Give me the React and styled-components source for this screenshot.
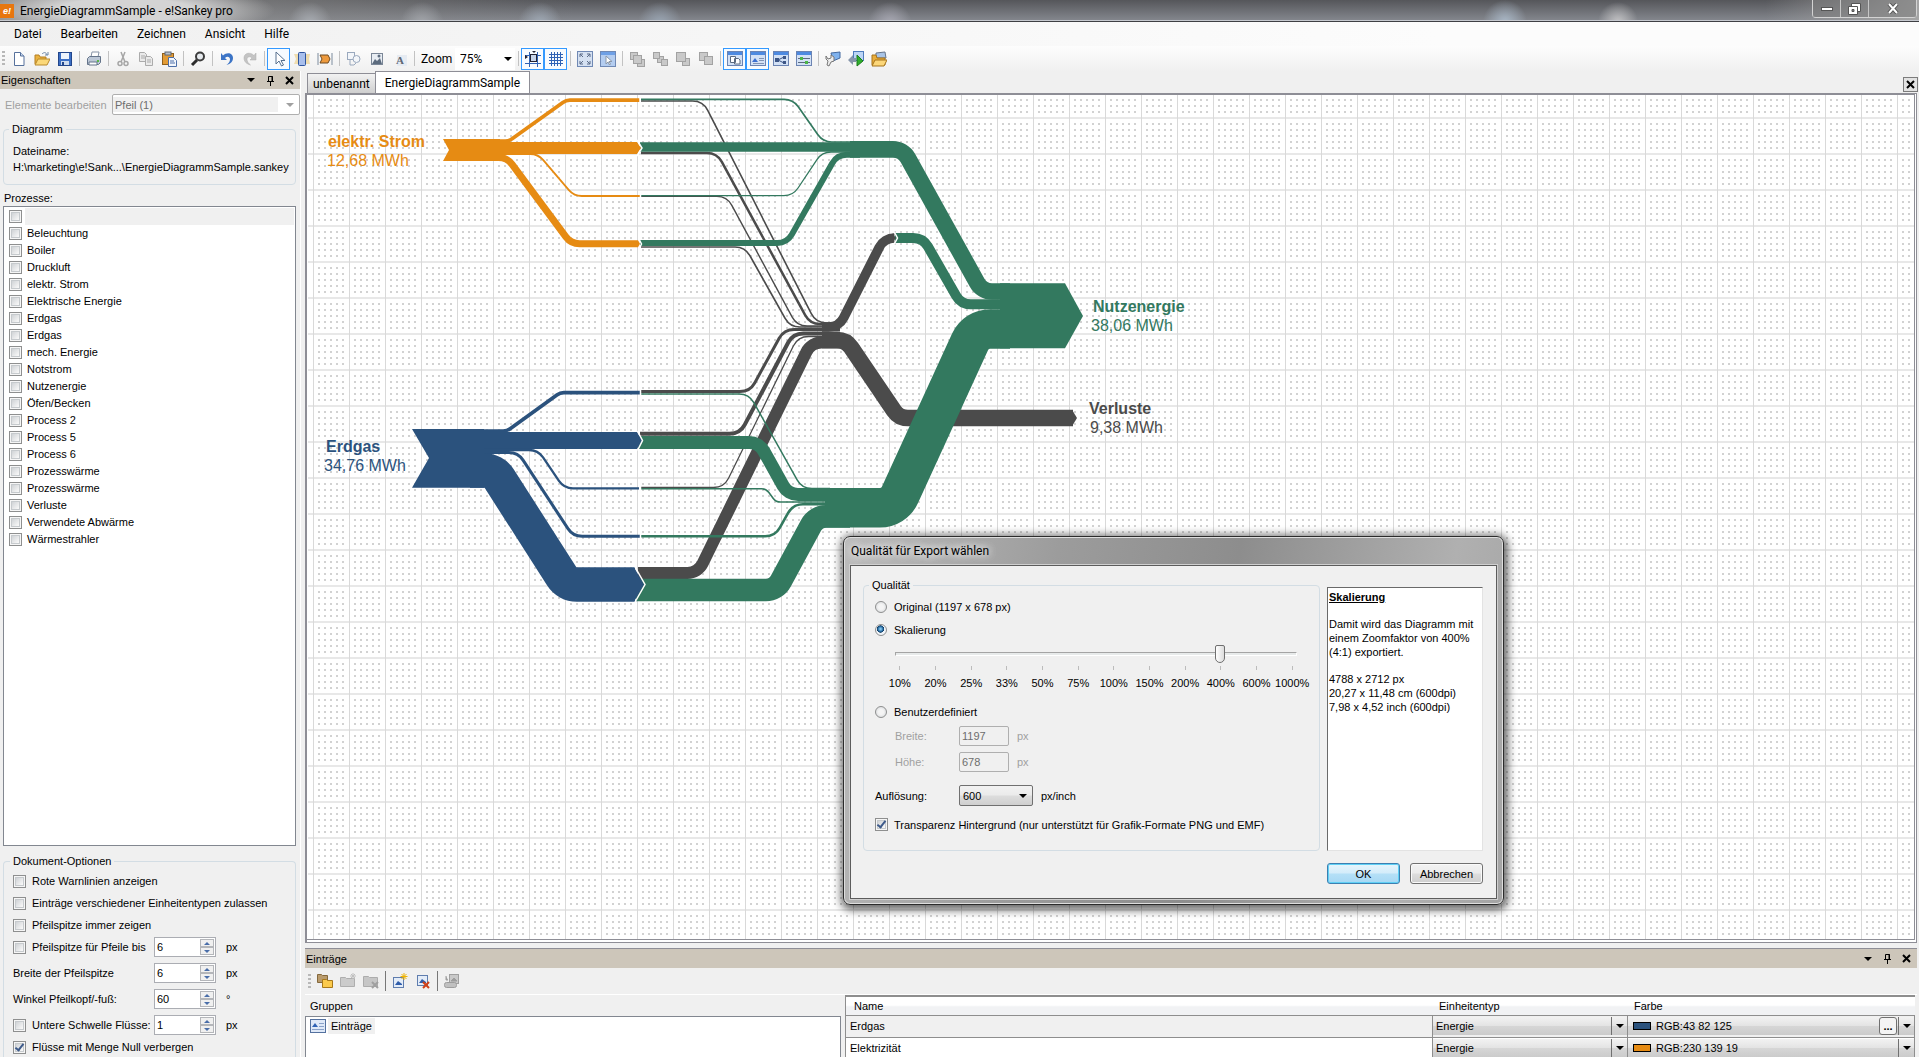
import { useState } from "react";
import styled, { createGlobalStyle, css } from "styled-components";

const GlobalStyle = createGlobalStyle`
  *, *::before, *::after {
    box-sizing: border-box;
  }

  body {
    margin: 0;
    overflow: hidden;
    background: #f0f0f0;
    color: #000;
    font: 11px/14px "Liberation Sans", Arial, sans-serif;
  }

  button, input, select {
    font: inherit;
    color: inherit;
    margin: 0;
  }
`;

const uiFont = css`
  font-family: Roboto, "Noto Sans", sans-serif;
  font-size: 12px;
`;

/* ---------- window frame ---------- */

const Window = styled.div`
  display: flex;
  flex-direction: column;
  height: 100vh;
`;

const TitleBar = styled.header`
  ${uiFont}
  position: relative;
  display: flex;
  flex: none;
  align-items: center;
  gap: 6px;
  height: 22px;
  border-bottom: 1px solid #3f4044;
  box-shadow: inset 0 -1px 0 #c6c9cf;
  background:
    radial-gradient(ellipse 150px 26px at 125px 10px, #d4d4d4 45%, transparent),
    radial-gradient(circle at 310px 24px, #a9adb3, transparent 22px),
    radial-gradient(circle at 422px 24px, #a3a6ab, transparent 22px),
    radial-gradient(circle at 540px 24px, #a0aab6, transparent 22px),
    radial-gradient(circle at 660px 24px, #9aa6b4, transparent 22px),
    radial-gradient(circle at 890px 24px, #a9a9b4, transparent 22px),
    radial-gradient(circle at 1505px 22px, #a9b7c6, transparent 22px),
    radial-gradient(circle at 1618px 22px, #c2c2c4, transparent 20px),
    linear-gradient(to right, #8a8a8a, transparent 30%, transparent 92%, #a5a5a5),
    linear-gradient(#55565a, #85888f);
`;

const AppBadge = styled.span`
  display: grid;
  place-items: center;
  width: 14px;
  height: 14px;
  background: #e8760e;
  color: #fff;
  font: italic bold 9px/12px "Liberation Sans", sans-serif;
`;

const WindowButtons = styled.div`
  display: flex;
  align-self: flex-start;
  height: 18px;
  margin: 0 2px 0 auto;
  border: 1px solid #d3d3d3;
  border-top: 0;
  border-radius: 0 0 4px 4px;
`;

const WindowButton = styled.button`
  display: grid;
  place-items: center;
  width: ${(props) => (props.$wide ? "47px" : "28px")};
  padding: 0;
  border: 0;
  border-right: 1px solid #c6c6c6;
  background: rgba(120, 120, 120, 0.5);

  &:last-child {
    border-right: 0;
  }
`;

const MenuBar = styled.nav`
  ${uiFont}
  display: flex;
  flex: none;
  gap: 19px;
  height: 24px;
  padding-left: 14px;
  align-items: center;
  background: linear-gradient(to right, #f0f0f0, #fcfcfc 75%);
`;

const MenuItem = styled.button`
  padding: 0;
  border: 0;
  background: none;
`;

const ToolBar = styled.div`
  display: flex;
  flex: none;
  align-items: center;
  height: 25px;
  padding-left: 7px;
  background: linear-gradient(#fdfdfd, #f0f0f0);
`;

const Grip = styled.span`
  width: 3px;
  height: 15px;
  margin: 0 ${(props) => (props.$spaced ? "2px" : "2px")} 0 ${(props) => (props.$spaced ? "3px" : "-5px")};
  background: repeating-linear-gradient(#b8b8b8 0 2px, transparent 2px 4px);
`;

const ToolButton = styled.button`
  display: grid;
  flex: none;
  place-items: center;
  width: 23px;
  height: 22px;
  padding: 0;
  border: 1px solid ${(props) => (props.$active ? "#3399ff" : "transparent")};
  background: ${(props) => (props.$active ? "#f7fbff" : "none")};
`;

const ToolSeparator = styled.span`
  flex: none;
  width: 1px;
  height: ${(props) => (props.$dark ? "20px" : "15px")};
  margin: 0 2px 0 3px;
  background: ${(props) => (props.$dark ? "#777" : "#c2c2c2")};
`;

const ZoomLabel = styled.label`
  ${uiFont}
  width: 38px;
  padding-left: 4px;
`;

const Arrow = styled.span`
  width: 0;
  border: 4px solid transparent;
  border-top-color: ${(props) => props.$color || "#000"};
  border-bottom: 0;
  pointer-events: none;
`;

const ZoomBox = styled.span`
  display: flex;
  align-items: center;
  width: 60px;
  height: 22px;
  background: #fff;

  select {
    ${uiFont}
    width: 49px;
    padding: 0 0 0 5px;
    border: 0;
    background: none;
    appearance: none;
  }
`;

const Body = styled.div`
  display: flex;
  flex: 1;
  min-height: 0;
`;

/* ---------- form parts ---------- */

const CheckInput = styled.input`
  position: relative;
  flex: none;
  width: 13px;
  height: 13px;
  border: 1px solid #8e8f8f;
  background: linear-gradient(135deg, #c4c8cc, #f6f6f6 75%);
  box-shadow: inset 0 0 0 1px #f6f6f6, inset 0 0 0 2px #c6cacd;
  appearance: none;

  &:checked::after {
    content: "";
    position: absolute;
    top: 0;
    left: 3px;
    width: 5px;
    height: 9px;
    border: solid #3d5a8a;
    border-width: 0 2px 2px 0;
    transform: rotate(38deg);
  }
`;

const RadioInput = styled.input`
  flex: none;
  width: 12px;
  height: 12px;
  border: 1px solid #8e8f8f;
  border-radius: 50%;
  background: radial-gradient(circle, #f4f4f4 35%, #d0d3d6);
  appearance: none;

  &:checked {
    background: radial-gradient(circle at 45% 40%, #7ec3ee 8%, #17578c 36%, #12395d 42%, #f0f4f8 48%);
  }
`;

const Group = styled.fieldset`
  min-width: 0;
  margin: 0;
  padding: ${(props) => props.$padding || "0 8px"};
  border: 1px solid #d3dde4;
  border-radius: 4px;
`;

const Legend = styled.legend`
  margin-left: ${(props) => (props.$outdent ? "-6px" : "-3px")};
  padding: 0 3px;
`;

const ComboFrame = styled.span`
  display: flex;
  align-items: center;
  height: 21px;
  width: ${(props) => props.$width || "auto"};
  flex: ${(props) => (props.$width ? "none" : "1")};
  padding-right: 5px;
  border: 1px solid ${(props) => props.$border || "#707070"};
  border-radius: 2px;
  background: ${(props) =>
    props.$flat ? "#fff" : "linear-gradient(#f2f2f2, #ebebeb 48%, #dddddd 52%, #cfcfcf)"};

  select {
    flex: 1;
    min-width: 0;
    height: 100%;
    padding: 0 3px;
    border: 0;
    background: none;
    opacity: 1;
    appearance: none;
  }

  select:disabled {
    height: 15px;
    margin-right: 8px;
    padding: 0 2px;
    background: #f0f0f0;
    color: #6d6d6d;
  }
`;

/* ---------- docked panels ---------- */

const PanelHeader = styled.div`
  display: flex;
  flex: none;
  align-items: center;
  gap: 7px;
  height: ${(props) => props.$height || "18px"};
  padding: 0 5px 0 1px;
  background: #cdc6ba;

  span:first-child {
    flex: 1;
  }
`;

const PanelButton = styled.button`
  display: grid;
  place-items: center;
  width: 12px;
  height: 12px;
  padding: 0;
  border: 0;
  background: none;
`;

const SidePanel = styled.aside`
  display: flex;
  flex: none;
  flex-direction: column;
  width: 300px;
`;

const EditRow = styled.div`
  display: flex;
  align-items: center;
  height: 21px;
  margin: 5px 0 7px;
  color: #a0a0a0;

  label {
    width: 107px;
    margin-left: 5px;
  }
`;

const SideContent = styled.div`
  display: flex;
  flex: 1;
  flex-direction: column;
  min-height: 0;
  margin: 0 4px 0 3px;
`;

const FileInfo = styled.p`
  margin: 7px 0 9px;
  padding-left: 1px;
  line-height: 16px;
  white-space: nowrap;
`;

const ListTitle = styled.h2`
  margin: 6px 0 1px 1px;
  font: inherit;
`;

const ProcessList = styled.ul`
  flex: 1;
  min-height: 0;
  margin: 0 0 8px;
  padding: 1px 1px 1px 5px;
  overflow: hidden;
  border: 1px solid #828790;
  background: #fff;
  list-style: none;
`;

const ProcessItem = styled.li`
  display: flex;
  align-items: center;
  gap: 3px;
  height: 17px;

  label {
    flex: 1;
    height: 17px;
    padding-left: 2px;
    line-height: 17px;
    background: ${(props) => (props.$selected ? "#f0f0f0" : "none")};
  }
`;

const OptionGroup = styled(Group)`
  height: 203px;
  padding: 2px 8px 0 9px;
  border-bottom: 0;
  border-radius: 4px 4px 0 0;
`;

const OptionRow = styled.div`
  display: flex;
  align-items: center;
  height: ${(props) => (props.$last ? "20px" : "22px")};
  margin-top: ${(props) => (props.$last ? "1px" : props.$spaced ? "4px" : "0")};

  label {
    white-space: nowrap;
  }

  ${CheckInput} + label {
    margin-left: 6px;
  }

  ${CheckInput} + label.fixed {
    width: 122px;
  }

  label.wide {
    width: 141px;
  }
`;

const SpinBox = styled.span`
  display: flex;
  width: 62px;
  height: 20px;
  margin-right: 10px;
  padding: 1px;
  border: 1px solid #abadb3;
  background: #fff;

  input {
    flex: 1;
    min-width: 0;
    padding: 0 1px;
    border: 0;
    outline: 0;
  }
`;

const SpinButtons = styled.span`
  display: flex;
  flex-direction: column;
  width: 14px;
`;

const SpinButton = styled.button`
  display: grid;
  flex: 1;
  place-items: center;
  padding: 0;
  border: 1px solid #b4b6ba;
  background: #f0f0f0;
`;

const Splitter = styled.div`
  flex: none;
  width: 5px;
  border-left: 1px solid #fff;
  background: #f0f0f0;
`;

/* ---------- diagram area ---------- */

const Main = styled.main`
  display: flex;
  flex: 1;
  flex-direction: column;
  min-width: 0;
`;

const TabStrip = styled.div`
  display: flex;
  flex: none;
  align-items: flex-end;
  height: 22px;
  padding: 0 1px 0 2px;
`;

const Tab = styled.button`
  ${uiFont}
  height: ${(props) => (props.$active ? "22px" : "20px")};
  padding: 0 ${(props) => (props.$active ? "9px" : "5px")};
  border: 1px solid #8e8e96;
  border-bottom: 0;
  border-right-width: ${(props) => (props.$active ? "1px" : "0")};
  background: ${(props) => (props.$active ? "#fff" : "linear-gradient(#f2f2f2, #cfcfcf)")};
`;

const CloseTab = styled.button`
  display: grid;
  place-items: center;
  width: 15px;
  height: 15px;
  margin: 0 0 1px auto;
  padding: 0;
  border: 1px solid #7c7c7c;
  background: #e2e2e2;
`;

const CanvasFrame = styled.div`
  display: flex;
  flex: 1;
  min-height: 0;
  margin-right: 2px;
  padding: 0 1px 2px 0;
  border: 1px solid #8e8e96;
  border-width: 1px 1px 1px 2px;
  background: #fff;
`;

const Canvas = styled.svg`
  display: block;
  flex: 1;
  min-width: 0;
  height: 100%;
  border: 1px solid #8e8e96;
  border-left: 0;
  background: #fff;
`;

const DiagramText = styled.text`
  font: ${(props) => (props.$bold ? "bold" : "normal")} 16px "Liberation Sans", Arial, sans-serif;
`;

/* ---------- entries panel ---------- */

const EntriesPanel = styled.section`
  flex: none;
  height: 109px;
  margin: 5px 2px 0 0;
  overflow: hidden;
  border-top: 1px solid #8e8e96;
`;

const EntriesTools = styled.div`
  display: flex;
  align-items: center;
  height: 27px;
  border-bottom: 1px solid #fff;
`;

const EntriesBody = styled.div`
  display: flex;
  gap: 4px;
  margin-right: 2px;
`;

const GroupTree = styled.div`
  flex: none;
  width: 536px;

  h3 {
    height: 21px;
    margin: 0;
    padding-left: 5px;
    font: inherit;
    line-height: 22px;
  }

  ul {
    height: 44px;
    margin: 0;
    padding: 1px 4px;
    border: 1px solid #828790;
    background: #fff;
    list-style: none;
  }

  li {
    display: flex;
    align-items: center;
    gap: 2px;
  }

  li span {
    padding: 1px 3px;
    background: #f0f0f0;
  }
`;

const EntryTable = styled.table`
  flex: 1;
  border-collapse: collapse;
  border-top: 2px solid #8e8e8e;
  table-layout: fixed;

  th, td {
    height: 19px;
    padding: 0;
    border: 1px solid #8e8e8e;
    text-align: left;
  }

  th {
    padding-left: 6px;
    border-color: transparent transparent #8e8e8e #e2e2e2;
    background: linear-gradient(#fff 45%, #f1f2f4 55%);
    font-weight: normal;
  }

  th:first-child {
    padding-left: 8px;
    border-left-color: #8e8e8e;
  }

  td:first-child {
    padding-left: 4px;
  }
`;

const EntryRow = styled.tr`
  background: ${(props) => (props.$selected ? "#f0f0f0" : "#fff")};
`;

const CellCombo = styled.div`
  display: flex;
  align-items: stretch;
  height: 18px;
  background: linear-gradient(#f2f2f2, #e4e4e4 48%, #d6d6d6 52%, #cbcbcb);

  select {
    flex: 1;
    min-width: 0;
    padding: 0 3px;
    border: 0;
    background: none;
    appearance: none;
  }
`;

const Swatch = styled.span`
  align-self: center;
  width: 18px;
  height: 8px;
  margin: 0 2px 0 5px;
  border: 1px solid #000;
  background: ${(props) => props.$color};
`;

const MoreButton = styled.button`
  width: 18px;
  margin-right: 1px;
  padding: 0;
  border: 1px solid #707070;
  border-radius: 3px;
  background: #f4f4f4;
  font-weight: bold;
  line-height: 12px;
`;

const CellArrow = styled.span`
  display: grid;
  place-items: center;
  width: 16px;
  border-left: 1px solid #707070;
`;

/* ---------- export dialog ---------- */

const DialogWindow = styled.section`
  position: absolute;
  top: 536px;
  left: 843px;
  width: 661px;
  padding: 0 6px 5px;
  border: 1px solid #2b2b2b;
  border-radius: 7px;
  background: linear-gradient(100deg, #bcbcbc, #9c9c9c 30%, #8d8d8d 55%, #b0b0b0 85%, #a4a4a4);
  box-shadow: inset 0 0 0 1px #dedede, 1px 2px 9px 3px rgba(0, 0, 0, 0.6);
`;

const DialogTitle = styled.h2`
  ${uiFont}
  height: 28px;
  margin: 0;
  padding-left: 1px;
  font-weight: normal;
  line-height: 29px;
  text-shadow: 0 0 8px #fff, 0 0 8px #fff;
`;

const DialogForm = styled.form`
  display: grid;
  grid-template-columns: 1fr 156px;
  column-gap: 7px;
  row-gap: 12px;
  padding: 12px 13px 14px 12px;
  border: 1px solid #5c5c5c;
  outline: 1px solid #cfcfcf;
  background: #f0f0f0;
`;

const QualityRow = styled.div`
  display: flex;
  align-items: center;
  height: ${(props) => props.$height || "23px"};
  margin-top: ${(props) => props.$gap || "0"};
  padding-left: ${(props) => (props.$indent ? "20px" : "0")};
  color: ${(props) => (props.$disabled ? "#a0a0a0" : "inherit")};

  input + label {
    margin-left: 7px;
  }

  ${CheckInput} + label {
    margin-left: 6px;
  }

  label.caption {
    flex: none;
    width: ${(props) => (props.$indent ? "64px" : "84px")};
  }

  ${ComboFrame} {
    margin-right: 8px;
  }
`;

const SizeInput = styled.input`
  width: 50px;
  height: 20px;
  margin-right: 8px;
  padding: 0 2px;
  border: 1px solid #afafaf;
  border-radius: 2px;
  background: #f0f0f0;

  &:disabled {
    color: #6d6d6d;
  }
`;

const Slider = styled.input`
  display: block;
  width: 402px;
  height: 23px;
  margin: 1px 0 0 20px;
  background: none;
  appearance: none;

  &::-webkit-slider-runnable-track {
    height: 4px;
    border: 1px solid #fff;
    border-top-color: #a4a4a4;
    border-left-color: #a4a4a4;
    background: #e7eaea;
  }

  &::-webkit-slider-thumb {
    width: 10px;
    height: 18px;
    margin-top: -8px;
    border: 1px solid #6f6f6f;
    border-radius: 2px 2px 5px 5px;
    background: linear-gradient(to right, #fff, #dcdcdc);
    appearance: none;
  }
`;

const Scale = styled.div`
  display: grid;
  grid-template-columns: repeat(12, 1fr);
  width: 428px;
  margin-left: 7px;
  text-align: center;
  white-space: nowrap;

  span::before {
    content: "";
    display: block;
    width: 1px;
    height: 4px;
    margin: 1px auto 6px;
    background: #bcbcbc;
  }
`;

const InfoBox = styled.div`
  margin-top: 9px;
  padding: 2px 1px;
  border: 1px solid #e3e3e3;
  border-top-color: #696969;
  border-left-color: #696969;
  background: #fff;

  h3 {
    margin: 0;
    font-size: 11px;
    text-decoration: underline;
  }

  p {
    margin: 13px 0 0;
  }
`;

const DialogButtons = styled.div`
  display: flex;
  grid-column: 2;
  justify-content: space-between;
`;

const DialogButton = styled.button`
  width: 73px;
  height: 21px;
  padding: 0;
  border: 1px solid ${(props) => (props.$primary ? "#3c7fb1" : "#707070")};
  border-radius: 3px;
  box-shadow: inset 0 0 0 1px ${(props) => (props.$primary ? "#5fd0f5" : "#fafafa")};
  background: ${(props) =>
    props.$primary
      ? "linear-gradient(#e6f5fc, #d3ecfa 48%, #b5e0f7 52%, #a6d8f4)"
      : "linear-gradient(#f2f2f2, #ebebeb 48%, #dddddd 52%, #cfcfcf)"};
`;

/* ---------- icons ---------- */

const WindowShape = () => (
  <>
    <rect x="0.5" y="0.5" width="15" height="14" fill="#d3e1f5" stroke="#6c84b2" />
    <rect x="1" y="1" width="14" height="3" fill="#4e8ae0" />
  </>
);

const graySquare = { fill: "#c9c9c9", stroke: "#a2a2a2" };

const icons = {
  create: (
    <>
      <path d="M3.5 1.5h6l3.5 3.5v9.500h-9.500z" fill="#fff" stroke="#56719c" />
      <path d="M9.5 1.5v3.500h3.500" fill="#c8d8ee" stroke="#56719c" />
    </>
  ),
  open: (
    <>
      <path d="M1 13V4h4l1 2h6v3" fill="#e9b13f" stroke="#b57f22" />
      <path d="M1 14l3-6h12l-3 6z" fill="#fbd879" stroke="#b98a2c" />
      <path d="M8 3c2-2 4-2 5 1m-2 0h3l0-3" fill="none" stroke="#6d87a8" />
    </>
  ),
  save: (
    <>
      <rect x="1.5" y="1.5" width="13" height="13" fill="#3c6fc4" stroke="#23468b" />
      <rect x="4" y="2" width="8" height="6" fill="#eef4fc" />
      <rect x="4" y="10" width="8" height="4" fill="#cfdcee" />
      <rect x="5" y="11" width="2" height="3" fill="#23468b" />
    </>
  ),
  print: (
    <>
      <path d="M5 6l1-5h7l-1 5" fill="#fff" stroke="#8793a6" />
      <path d="M1.5 7.5l2-2h11v6l-2 2h-11z" fill="#bcc7d6" stroke="#65748a" />
      <path d="M3 11h8v3H3z" fill="#fff" stroke="#65748a" />
      <rect x="11" y="9" width="2" height="2" fill="#58b846" />
    </>
  ),
  cut: (
    <g fill="none" stroke="#a6a6a6" strokeWidth="1.5">
      <path d="M6 1l4 10M10 1L6 11" />
      <circle cx="5" cy="12.5" r="2" />
      <circle cx="11" cy="12.5" r="2" />
    </g>
  ),
  copy: (
    <g fill="#eaeaea" stroke="#ababab">
      <path d="M1.5 1.5h5l2 2v7h-7z" />
      <path d="M7.5 5.5h5l2 2v7h-7z" />
      <path d="M3 5h4M3 7h4M9 9h4M9 11h4" />
    </g>
  ),
  paste: (
    <>
      <rect x="1.5" y="2.5" width="11" height="11" fill="#e29b35" stroke="#8f5f1c" />
      <rect x="4" y="1" width="6" height="3" fill="#b9c1cc" stroke="#5f6976" />
      <path d="M7.5 6.5h5l3 3v6h-8z" fill="#f2f6fc" stroke="#4c6ea8" />
      <path d="M9 10h4M9 12h5" stroke="#4c6ea8" />
    </>
  ),
  search: (
    <>
      <circle cx="10" cy="5.5" r="4" fill="#e6eaee" stroke="#3c3c3c" strokeWidth="2" />
      <path d="M7 9l-5 5" stroke="#2c2c2c" strokeWidth="3" />
    </>
  ),
  undo: (
    <path d="M2 2v7h6L6 7c2-2 5-1.500 5 1.500 0 2-1.500 4-3.500 5.500 4-1 6.500-3.500 6.500-7C14 2 8 .5 4 4.500z" fill="#3c74c6" />
  ),
  redo: (
    <path d="M14 2v7H8l2-2c-2-2-5-1.500-5 1.500 0 2 1.500 4 3.500 5.500-4-1-6.500-3.500-6.500-7C2 2 8 .5 12 4.500z" fill="#c4c4c4" stroke="#adadad" strokeWidth="0.5" />
  ),
  pointer: <path d="M5 1v12l3-3 2.500 5 2-1-2.500-4.500h4z" fill="#fff" stroke="#56708f" />,
  process: (
    <>
      <path d="M0 3h4v10H0l2-5zM12 3h4l-1 5 1 5h-4z" fill="#efdcae" />
      <rect x="4.5" y="1.5" width="7" height="13" rx="1" fill="#a9bfec" stroke="#2f559e" />
    </>
  ),
  arrow: (
    <>
      <path d="M1 2v12M15 2v12" stroke="#b9c1ca" strokeWidth="2" />
      <path d="M3 4h8l2 4-2 4H3l2-4z" fill="#ee9a3d" stroke="#6e4a21" />
    </>
  ),
  shapes: (
    <g fill="#f3f6fa" stroke="#9aa9be">
      <rect x="1.5" y="1.5" width="7" height="7" />
      <circle cx="10.5" cy="8" r="3.5" />
      <path d="M4 9v5h4l2-2" fill="none" />
    </g>
  ),
  image: (
    <>
      <rect x="2.5" y="2.5" width="11" height="11" fill="#e8edf3" stroke="#7b8797" />
      <path d="M3 13l3-5 2 2 3-3 2 6z" fill="#5c6b7e" />
      <circle cx="10" cy="5" r="1.5" fill="#5c6b7e" />
    </>
  ),
  letter: (
    <>
      <rect x="5" y="4" width="10" height="11" fill="#e6ebf2" />
      <text x="4" y="13" fontSize="11" fontWeight="bold" fontFamily="Liberation Serif, serif" fill="#5d6672">A</text>
    </>
  ),
  snap: (
    <>
      <path d="M4.5 1v15M12.500 1v15M0 4.500h16M0 12.500h16" stroke="#2f62b5" />
      <rect x="5.5" y="3.5" width="6" height="7" fill="#c7d5ea" stroke="#223" />
      <path d="M0 4l3 2-3 2zM7 0h4L9 2z" fill="#223" />
    </>
  ),
  grid: <path d="M3.5 1v14M6.500 1v14M9.500 1v14M12.500 1v14M1 3.500h14M1 6.500h14M1 9.500h14M1 12.500h14" stroke="#2f62b5" />,
  fit: (
    <>
      <rect x="0.5" y="0.5" width="15" height="15" fill="#d5e1f2" stroke="#7089b4" />
      <path d="M3 6V3h3M10 3h3v3M13 10v3h-3M6 13H3v-3M3 3l3 3M13 3l-3 3M13 13l-3-3M3 13l3-3" fill="none" stroke="#5a6b87" />
    </>
  ),
  select: (
    <>
      <rect x="0.5" y="0.5" width="15" height="15" fill="#b4cdf0" stroke="#7089b4" />
      <rect x="1" y="1" width="14" height="3" fill="#6ea0e6" />
      <path d="M6 5v8l2-2 1.500 3 1-1-1.500-2.500H12z" fill="#fff" stroke="#8a97a8" />
    </>
  ),
  front: (
    <g {...graySquare}>
      <rect x="1.5" y="1.5" width="7" height="7" />
      <rect x="8.5" y="8.5" width="7" height="7" />
      <rect x="4.5" y="4.5" width="8" height="8" />
    </g>
  ),
  back: (
    <g {...graySquare}>
      <rect x="5.5" y="5.5" width="6" height="6" />
      <rect x="1.5" y="1.5" width="6" height="6" />
      <rect x="9.5" y="8.5" width="6" height="6" />
    </g>
  ),
  forward: (
    <g {...graySquare}>
      <rect x="7.5" y="7.5" width="7" height="7" />
      <rect x="1.5" y="1.5" width="9" height="9" />
    </g>
  ),
  backward: (
    <g {...graySquare}>
      <rect x="1.5" y="1.5" width="8" height="8" />
      <rect x="6.5" y="5.5" width="8" height="8" />
    </g>
  ),
  panelPages: (
    <>
      <WindowShape />
      <path d="M3.5 5.5h5v6h-5zM7.500 7.500h4l1.500 1.500v4h-5.500z" fill="#fff" stroke="#5b6a80" />
    </>
  ),
  panelEntries: (
    <>
      <WindowShape />
      <path d="M2 11l3-4 3 4z" fill="#3a6fd0" />
      <path d="M9 7.500h5M9 9.500h5M3 12.500h11" stroke="#8294b3" />
    </>
  ),
  panelLinks: (
    <>
      <WindowShape />
      <path d="M5 9l6-3M5 9l6 3" stroke="#3d5686" />
      <path d="M2 7h4v4H2zM10 5h3v3h-3zM10 10h3v3h-3z" fill="#3d5686" />
    </>
  ),
  panelSliders: (
    <>
      <WindowShape />
      <path d="M2 7.500h12M2 11.500h12" stroke="#5b6a80" />
      <path d="M4 6h3v3H4zM9 10h3v3H9z" fill="#4cb648" />
    </>
  ),
  settings: (
    <>
      <path d="M6 2l9-1v6l-7 3z" fill="#7fb2ee" stroke="#43699f" />
      <path d="M1 5l2 3 3-1 0-3 3 2v4l-3 1-2 4-2-1 1-4-2-2z" fill="#ededed" stroke="#777" />
    </>
  ),
  transfer: (
    <>
      <rect x="5.5" y="0.5" width="10" height="9" fill="#bcd5f5" stroke="#4e7cbd" />
      <path d="M0 9l5-5v3h3v4H5v3z" fill="#8796ab" />
      <path d="M9 4l6 6-6 5z" fill="#2fae2d" stroke="#1c7a1c" />
    </>
  ),
  library: (
    <>
      <path d="M5 2l9-1 1 6H5z" fill="#a9c4e6" stroke="#66758c" />
      <path d="M1 14V4h4l1 3h8v7z" fill="#e9ad3b" stroke="#a6741c" />
      <path d="M1 15l3-6h12l-3 6z" fill="#fcd77a" stroke="#a6741c" />
    </>
  ),
  folderGroup: (
    <>
      <path d="M0.5 9.5v-8h4l1 1h5v7z" fill="#b99b6d" stroke="#84683c" />
      <path d="M5.5 14.5v-8h4l1 1h5v7z" fill="#fbca4c" stroke="#a87818" />
    </>
  ),
  folderNew: (
    <>
      <path d="M0.5 13.500v-9h5l1 1h8v8z" fill="#cbcbcb" stroke="#aeaeae" />
      <path d="M13 0v6M10 3h6M11 1l4 4M15 1l-4 4" stroke="#c0c0c0" />
    </>
  ),
  folderDelete: (
    <>
      <path d="M0.5 13.500v-10h5l1 1h8v9z" fill="#c6c6c6" stroke="#acacac" />
      <path d="M9 9l6 6M15 9l-6 6" stroke="#a0a0a0" strokeWidth="2" />
    </>
  ),
  entryNew: (
    <>
      <rect x="1.5" y="4.5" width="10" height="10" fill="#e3ecf8" stroke="#5f7dae" />
      <path d="M3 12l3-4 4 3v1z" fill="#2f5dab" />
      <path d="M12 0v7M8.500 3.500h7M9.500 1l5 5M14.500 1l-5 5" stroke="#f0b400" />
    </>
  ),
  entryDelete: (
    <>
      <rect x="2.5" y="2.5" width="10" height="10" fill="#e3ecf8" stroke="#5f7dae" />
      <path d="M4 10l3-4 4 3v1z" fill="#2f5dab" />
      <path d="M8 9l6 6M14 9l-6 6" stroke="#cf4018" strokeWidth="2" />
    </>
  ),
  stack: (
    <>
      <rect x="5.5" y="1.5" width="9" height="9" fill="#c9c9c9" stroke="#a0a0a0" />
      <rect x="0.5" y="9.5" width="12" height="5" rx="2" fill="#c0c0c0" stroke="#9d9d9d" />
      <path d="M7 8l3-3 3 3zM2 3v4h2" fill="#9d9d9d" stroke="#9d9d9d" />
    </>
  ),
  entries: (
    <>
      <rect x="0.5" y="1.5" width="15" height="13" fill="#dfe9f8" stroke="#54719f" />
      <path d="M2 9l3-4 3 4z" fill="#2f62b5" />
      <path d="M9 5.500h5M9 8.500h5M2 11.500h12" stroke="#8aa2c9" />
    </>
  ),
};

const Icon = ({ name }) => (
  <svg width="16" height="16" viewBox="0 0 16 16" aria-hidden="true">
    {icons[name]}
  </svg>
);

const PinIcon = () => (
  <svg width="9" height="11" viewBox="0 0 9 11" fill="none" stroke="#000" aria-hidden="true">
    <path d="M2.5 6V1.500h4V6M6 1v5M1 6.500h7M4.500 7v4" />
  </svg>
);

const CrossIcon = ({ size = 9 }) => (
  <svg width={size} height={size} viewBox="0 0 9 9" stroke="#000" strokeWidth="2" aria-hidden="true">
    <path d="M1 1l7 7M8 1L1 8" />
  </svg>
);

/* ---------- data ---------- */

const menus = ["Datei", "Bearbeiten", "Zeichnen", "Ansicht", "Hilfe"];

const toolsLeft = [
  ["create", "open", "save"],
  ["print"],
  ["cut", "copy", "paste"],
  ["search"],
  ["undo", "redo"],
  ["pointer", "process", "arrow"],
  ["shapes", "image", "letter"],
];

const toolsRight = [
  ["snap", "grid"],
  ["fit", "select"],
  ["front", "back", "forward", "backward"],
  ["panelPages", "panelEntries", "panelLinks", "panelSliders"],
  ["settings", "transfer", "library"],
];

const activeTools = ["pointer", "snap", "grid", "panelPages", "panelEntries"];

const processes = [
  "",
  "Beleuchtung",
  "Boiler",
  "Druckluft",
  "elektr. Strom",
  "Elektrische Energie",
  "Erdgas",
  "Erdgas",
  "mech. Energie",
  "Notstrom",
  "Nutzenergie",
  "Öfen/Becken",
  "Process 2",
  "Process 5",
  "Process 6",
  "Prozesswärme",
  "Prozesswärme",
  "Verluste",
  "Verwendete Abwärme",
  "Wärmestrahler",
];

const options = [
  { label: "Rote Warnlinien anzeigen", check: true },
  { label: "Einträge verschiedener Einheitentypen zulassen", check: true },
  { label: "Pfeilspitze immer zeigen", check: true },
  { label: "Pfeilspitze für Pfeile bis", check: true, value: "6", unit: "px" },
  { label: "Breite der Pfeilspitze", value: "6", unit: "px" },
  { label: "Winkel Pfeilkopf/-fuß:", value: "60", unit: "°" },
  { label: "Untere Schwelle Flüsse:", check: true, value: "1", unit: "px" },
  { label: "Flüsse mit Menge Null verbergen", check: true, checked: true },
];

const entries = [
  { name: "Erdgas", type: "Energie", color: "#2b527d", rgb: "RGB:43 82 125", selected: true },
  { name: "Elektrizität", type: "Energie", color: "#e68b13", rgb: "RGB:230 139 19" },
];

const scale = ["10%", "20%", "25%", "33%", "50%", "75%", "100%", "150%", "200%", "400%", "600%", "1000%"];

const GREEN = "#33795f";
const GRAY = "#4b4b4b";
const ORANGE = "#e68b13";
const BLUE = "#2b527d";

// colour, width, centre line points, optional corner radius
const flows = [
  // losses
  [GRAY, 1.6, [[641, 101], [703, 101], [816, 323], [840, 323]]],
  [GRAY, 2.5, [[641, 153], [717, 153], [810, 324], [840, 324]]],
  [GRAY, 1.4, [[641, 196.4], [727, 196.4], [797, 326], [840, 326]]],
  [GRAY, 1.7, [[641, 247], [745, 247], [790, 327], [840, 327]]],
  [GRAY, 3, [[641, 391.5], [750, 391.5], [784, 329.5], [840, 329.5]]],
  [GRAY, 4, [[640, 433.7], [740, 433.7], [793, 333.5], [840, 333.5]]],
  [GRAY, 1.3, [[641, 487.5], [724, 487.5], [798, 336.5], [840, 336.5]]],
  [GRAY, 12, [[638, 573], [698, 573], [811, 342.5], [840, 342.5]]],
  [GRAY, 9.7, [[822, 327], [839, 327], [884, 238], [893, 238]]],
  [GRAY, 16.5, [[822, 340], [846, 340], [899, 418], [1073, 418]]],
  // useful energy
  [GREEN, 1.7, [[641, 99.4], [793, 99.4], [823, 142], [850, 142]]],
  [GREEN, 9.7, [[640, 147], [860, 147]]],
  [GREEN, 1.3, [[641, 195.6], [793, 195.6], [822, 152], [850, 152]]],
  [GREEN, 6, [[640, 243], [787, 243], [837, 154.8], [860, 154.8]]],
  [GREEN, 16.7, [[850, 149.3], [903, 149.3], [982, 291.5], [1010, 291.5]]],
  [GREEN, 10, [[895, 238], [923, 238], [961, 304.3], [1010, 304.3]]],
  [GREEN, 1.5, [[641, 394], [749, 394], [802, 488.5], [830, 488.5]]],
  [GREEN, 13, [[638, 442.5], [759, 442.5], [788, 494.5], [830, 494.5]]],
  [GREEN, 1.6, [[641, 488.7], [766, 488.7], [776, 502], [830, 502]], 9],
  [GREEN, 2.6, [[641, 536.3], [775, 536.3], [793, 504.3], [830, 504.3]]],
  [GREEN, 22.7, [[636, 590], [776, 590], [816, 516.3], [850, 516.3]]],
  [GREEN, 39.6, [[825, 507.8], [894, 507.8], [976, 329], [1010, 329]], 22],
  // electricity
  [ORANGE, 3.7, [[480, 141], [509, 141], [566, 100.2], [640, 100.2]], 12],
  [ORANGE, 12, [[480, 148], [637, 148]]],
  [ORANGE, 1.8, [[490, 154], [538, 154], [574, 196], [640, 196]]],
  [ORANGE, 7, [[480, 157.5], [507, 157.5], [571, 243.7], [638, 243.7]]],
  // natural gas
  [BLUE, 3.7, [[470, 431], [507, 431], [560, 392.7], [640, 392.7]], 12],
  [BLUE, 17, [[470, 440.5], [637, 440.5]]],
  [BLUE, 2.3, [[470, 450], [538, 450], [564, 488.3], [639, 488.3]]],
  [BLUE, 3, [[470, 452.5], [518, 452.5], [573, 536.3], [640, 536.3]]],
  [BLUE, 34.5, [[470, 470.5], [494, 470.5], [567, 584.5], [635, 584.5]], 18],
];

const shapes = [
  [ORANGE, "443,139 500,139 500,161 443,161 449,150"],
  [ORANGE, "637,142 641,148 637,154"],
  [ORANGE, "638,240.2 640,243.7 638,247.2"],
  [BLUE, "412,429 484,429 484,487.7 412,487.7 429,458"],
  [BLUE, "637,432 642,440.5 637,449"],
  [BLUE, "634,567.2 644,584.5 634,601.8"],
  [GRAY, "892,233.2 896,238 892,242.8"],
  [GRAY, "1072,409.7 1077,418 1072,426.3"],
  [GREEN, "1000,283.3 1065,283.3 1083,316 1065,348.3 1000,348.3"],
];

const gaps = [
  "640,95 640,106",
  "637,140 642,148 637,156",
  "640.5,192 640.5,200",
  "639,239 641.5,244 639,249",
  "640.5,388 640.5,398",
  "637.5,431 642.5,440.5 637.5,450.5",
  "640.5,485 640.5,492",
  "640.5,532 640.5,541",
  "634.5,566 645,584.5 634.5,603",
  "894,231.5 897.5,238 894,244.5",
];

const labels = [
  { x: 328, y: 147, color: ORANGE, text: "elektr. Strom", bold: true },
  { x: 327, y: 166, color: ORANGE, text: "12,68 MWh" },
  { x: 1093, y: 312, color: GREEN, text: "Nutzenergie", bold: true },
  { x: 1091, y: 331, color: GREEN, text: "38,06 MWh" },
  { x: 1089, y: 414, color: GRAY, text: "Verluste", bold: true },
  { x: 1090, y: 433, color: GRAY, text: "9,38 MWh" },
  { x: 326, y: 452, color: BLUE, text: "Erdgas", bold: true },
  { x: 324, y: 471, color: BLUE, text: "34,76 MWh" },
];

// Polyline with every inner corner replaced by an arc.
function roundedPath(points, radius = 17) {
  let d = `M${points[0].join(" ")}`;

  for (let i = 1; i < points.length - 1; i++) {
    const [x, y] = points[i];
    const inX = x - points[i - 1][0];
    const inY = y - points[i - 1][1];
    const outX = points[i + 1][0] - x;
    const outY = points[i + 1][1] - y;
    const inLen = Math.hypot(inX, inY);
    const outLen = Math.hypot(outX, outY);
    const cross = inX * outY - inY * outX;
    const angle = Math.atan2(Math.abs(cross), inX * outX + inY * outY);
    const cut = radius * Math.tan(angle / 2);

    d += ` L${x - (inX / inLen) * cut} ${y - (inY / inLen) * cut}`;
    d += ` A${radius} ${radius} 0 0 ${cross > 0 ? 1 : 0}`;
    d += ` ${x + (outX / outLen) * cut} ${y + (outY / outLen) * cut}`;
  }

  return `${d} L${points[points.length - 1].join(" ")}`;
}

/* ---------- components ---------- */

function ToolGroup({ names }) {
  return names.map((name) => (
    <ToolButton key={name} type="button" aria-label={name} $active={activeTools.includes(name)}>
      <Icon name={name} />
    </ToolButton>
  ));
}

function MainToolbar() {
  return (
    <ToolBar>
      <Grip />
      {toolsLeft.map((names) => [
        <ToolGroup key={names[0]} names={names} />,
        <ToolSeparator key={`${names[0]}-end`} />,
      ])}
      <ZoomLabel htmlFor="zoom">Zoom</ZoomLabel>
      <ZoomBox>
        <select id="zoom" defaultValue="75%">
          <option>75%</option>
          <option>100%</option>
        </select>
        <Arrow />
      </ZoomBox>
      {toolsRight.map((names) => [
        <ToolSeparator key={`${names[0]}-start`} />,
        <ToolGroup key={names[0]} names={names} />,
      ])}
    </ToolBar>
  );
}

function Header({ title, height }) {
  return (
    <PanelHeader $height={height}>
      <span>{title}</span>
      <PanelButton type="button" aria-label="Optionen">
        <Arrow />
      </PanelButton>
      <PanelButton type="button" aria-label="Anheften">
        <PinIcon />
      </PanelButton>
      <PanelButton type="button" aria-label="Schließen">
        <CrossIcon />
      </PanelButton>
    </PanelHeader>
  );
}

function OptionLine({ option, id, spaced, last }) {
  const { label, check, checked, value, unit } = option;
  const inputId = check ? `${id}-check` : id;

  return (
    <OptionRow $spaced={spaced} $last={last}>
      {check && <CheckInput type="checkbox" id={inputId} defaultChecked={checked} />}
      <label htmlFor={inputId} className={value ? (check ? "fixed" : "wide") : undefined}>
        {label}
      </label>
      {value && (
        <>
          <SpinBox>
            <input type="text" id={id} aria-label={label} defaultValue={value} />
            <SpinButtons>
              <SpinButton type="button" aria-label="Mehr">
                <svg width="6" height="3" aria-hidden="true">
                  <path d="M0 3l3-3 3 3z" fill="#4a6ea9" />
                </svg>
              </SpinButton>
              <SpinButton type="button" aria-label="Weniger">
                <svg width="6" height="3" aria-hidden="true">
                  <path d="M0 0l3 3 3-3z" fill="#4a6ea9" />
                </svg>
              </SpinButton>
            </SpinButtons>
          </SpinBox>
          <span>{unit}</span>
        </>
      )}
    </OptionRow>
  );
}

function Properties() {
  return (
    <SidePanel>
      <Header title="Eigenschaften" />
      <EditRow>
        <label htmlFor="element">Elemente bearbeiten</label>
        <ComboFrame $flat $border="#afafaf">
          <select id="element" disabled>
            <option>Pfeil (1)</option>
          </select>
          <Arrow $color="#a0a0a0" />
        </ComboFrame>
      </EditRow>
      <SideContent>
        <Group>
          <Legend>Diagramm</Legend>
          <FileInfo>
            Dateiname:
            <br />
            H:\marketing\e!Sank...\EnergieDiagrammSample.sankey
          </FileInfo>
        </Group>
        <ListTitle>Prozesse:</ListTitle>
        <ProcessList>
          {processes.map((name, i) => (
            <ProcessItem key={i} $selected={i === 0}>
              <CheckInput type="checkbox" id={`process-${i}`} />
              <label htmlFor={`process-${i}`}>{name}</label>
            </ProcessItem>
          ))}
        </ProcessList>
        <OptionGroup>
          <Legend>Dokument-Optionen</Legend>
          {options.map((option, i) => (
            <OptionLine
              key={option.label}
              id={`option-${i}`}
              option={option}
              spaced={i > 3}
              last={i === options.length - 1}
            />
          ))}
        </OptionGroup>
      </SideContent>
    </SidePanel>
  );
}

function Diagram() {
  return (
    <Canvas role="img" aria-label="Sankey-Diagramm">
      <g transform="translate(-307 -95)">
        <defs>
          <pattern id="raster" x="313" y="117" width="36" height="36" patternUnits="userSpaceOnUse">
            <rect width="36" height="2" fill="#e8e8e8" />
            <rect width="1" height="36" fill="#d9d9d9" />
            {[6, 12, 18, 24, 30].map((y) =>
              [5, 11, 17, 23, 29].map((x) => (
                <rect key={`${x}-${y}`} x={x} y={y} width="2" height="2" fill="#d2d2d2" />
              ))
            )}
          </pattern>
        </defs>
        <rect x="308" y="95" width="4000" height="3000" fill="url(#raster)" />
        {flows.map(([color, width, points, radius], i) => (
          <path key={i} d={roundedPath(points, radius)} fill="none" stroke={color} strokeWidth={width} />
        ))}
        {shapes.map(([color, points]) => (
          <polygon key={points} points={points} fill={color} />
        ))}
        {gaps.map((points) => (
          <polyline key={points} points={points} fill="none" stroke="#fff" strokeWidth="1.5" />
        ))}
        {labels.map((label) => (
          <DiagramText key={label.text} x={label.x} y={label.y} fill={label.color} $bold={label.bold}>
            {label.text}
          </DiagramText>
        ))}
      </g>
    </Canvas>
  );
}

function Entries() {
  return (
    <EntriesPanel>
      <Header title="Einträge" height="19px" />
      <EntriesTools>
        <Grip $spaced />
        <ToolGroup names={["folderGroup", "folderNew", "folderDelete"]} />
        <ToolSeparator $dark />
        <ToolGroup names={["entryNew", "entryDelete"]} />
        <ToolSeparator $dark />
        <ToolGroup names={["stack"]} />
      </EntriesTools>
      <EntriesBody>
        <GroupTree>
          <h3>Gruppen</h3>
          <ul>
            <li>
              <Icon name="entries" />
              <span>Einträge</span>
            </li>
          </ul>
        </GroupTree>
        <EntryTable>
          <colgroup>
            <col />
            <col style={{ width: 195 }} />
            <col style={{ width: 287 }} />
          </colgroup>
          <thead>
            <tr>
              <th>Name</th>
              <th>Einheitentyp</th>
              <th>Farbe</th>
            </tr>
          </thead>
          <tbody>
            {entries.map((entry) => (
              <EntryRow key={entry.name} $selected={entry.selected}>
                <td>{entry.name}</td>
                <td>
                  <CellCombo>
                    <select aria-label={`Einheitentyp ${entry.name}`}>
                      <option>{entry.type}</option>
                    </select>
                    <CellArrow>
                      <Arrow />
                    </CellArrow>
                  </CellCombo>
                </td>
                <td>
                  <CellCombo>
                    <Swatch $color={entry.color} />
                    <select aria-label={`Farbe ${entry.name}`}>
                      <option>{entry.rgb}</option>
                    </select>
                    {entry.selected && <MoreButton type="button">...</MoreButton>}
                    <CellArrow>
                      <Arrow />
                    </CellArrow>
                  </CellCombo>
                </td>
              </EntryRow>
            ))}
          </tbody>
        </EntryTable>
      </EntriesBody>
    </EntriesPanel>
  );
}

function ExportDialog() {
  const [mode, setMode] = useState("scale");
  const [step, setStep] = useState(9);
  const custom = mode === "custom";

  return (
    <DialogWindow role="dialog" aria-labelledby="dialog-title">
      <DialogTitle id="dialog-title">Qualität für Export wählen</DialogTitle>
      <DialogForm onSubmit={(e) => e.preventDefault()}>
        <Group $padding="0 11px 14px">
          <Legend $outdent>Qualität</Legend>
          <QualityRow $gap="3px">
            <RadioInput
              type="radio"
              name="mode"
              id="mode-original"
              checked={mode === "original"}
              onChange={() => setMode("original")}
            />
            <label htmlFor="mode-original">Original (1197 x 678 px)</label>
          </QualityRow>
          <QualityRow>
            <RadioInput
              type="radio"
              name="mode"
              id="mode-scale"
              checked={mode === "scale"}
              onChange={() => setMode("scale")}
            />
            <label htmlFor="mode-scale">Skalierung</label>
          </QualityRow>
          <Slider
            type="range"
            min="0"
            max="11"
            aria-label="Skalierung"
            value={step}
            onChange={(e) => setStep(Number(e.target.value))}
          />
          <Scale>
            {scale.map((value) => (
              <span key={value}>{value}</span>
            ))}
          </Scale>
          <QualityRow $gap="10px">
            <RadioInput
              type="radio"
              name="mode"
              id="mode-custom"
              checked={custom}
              onChange={() => setMode("custom")}
            />
            <label htmlFor="mode-custom">Benutzerdefiniert</label>
          </QualityRow>
          <QualityRow $indent $disabled={!custom} $height="20px" $gap="3px">
            <label className="caption" htmlFor="width">Breite:</label>
            <SizeInput id="width" type="text" defaultValue="1197" disabled={!custom} />
            <span>px</span>
          </QualityRow>
          <QualityRow $indent $disabled={!custom} $height="20px" $gap="6px">
            <label className="caption" htmlFor="height">Höhe:</label>
            <SizeInput id="height" type="text" defaultValue="678" disabled={!custom} />
            <span>px</span>
          </QualityRow>
          <QualityRow $height="21px" $gap="13px">
            <label className="caption" htmlFor="resolution">Auflösung:</label>
            <ComboFrame $width="74px">
              <select id="resolution" defaultValue="600">
                <option>300</option>
                <option>600</option>
              </select>
              <Arrow />
            </ComboFrame>
            <span>px/inch</span>
          </QualityRow>
          <QualityRow $gap="7px">
            <CheckInput type="checkbox" id="transparent" defaultChecked />
            <label htmlFor="transparent">
              Transparenz Hintergrund (nur unterstützt für Grafik-Formate PNG und EMF)
            </label>
          </QualityRow>
        </Group>
        <InfoBox>
          <h3>Skalierung</h3>
          <p>
            Damit wird das Diagramm mit
            <br />
            einem Zoomfaktor von 400%
            <br />
            (4:1) exportiert.
          </p>
          <p>
            4788 x 2712 px
            <br />
            20,27 x 11,48 cm (600dpi)
            <br />
            7,98 x 4,52 inch (600dpi)
          </p>
        </InfoBox>
        <DialogButtons>
          <DialogButton type="submit" $primary>OK</DialogButton>
          <DialogButton type="button">Abbrechen</DialogButton>
        </DialogButtons>
      </DialogForm>
    </DialogWindow>
  );
}

function App() {
  return (
    <>
      <GlobalStyle />
      <Window>
        <TitleBar>
          <AppBadge>e!</AppBadge>
          <span>EnergieDiagrammSample - e!Sankey pro</span>
          <WindowButtons>
            <WindowButton type="button" aria-label="Minimieren">
              <svg width="12" height="6" aria-hidden="true">
                <rect x="0.5" y="1.5" width="11" height="3" fill="#fff" stroke="#555" />
              </svg>
            </WindowButton>
            <WindowButton type="button" aria-label="Wiederherstellen">
              <svg width="13" height="12" fill="#fff" stroke="#555" aria-hidden="true">
                <path d="M3.5.5h9v8h-9z" />
                <path d="M.5 3.500h9v8h-9z" />
                <path d="M4 6.500h2v2H4z" fill="#888" />
              </svg>
            </WindowButton>
            <WindowButton type="button" aria-label="Schließen" $wide>
              <svg width="12" height="11" aria-hidden="true">
                <path d="M2 1l8 9M10 1L2 10" stroke="#555" strokeWidth="4" />
                <path d="M2 1l8 9M10 1L2 10" stroke="#fff" strokeWidth="2" />
              </svg>
            </WindowButton>
          </WindowButtons>
        </TitleBar>
        <MenuBar>
          {menus.map((menu) => (
            <MenuItem key={menu} type="button">{menu}</MenuItem>
          ))}
        </MenuBar>
        <MainToolbar />
        <Body>
          <Properties />
          <Splitter />
          <Main>
            <TabStrip>
              <Tab type="button">unbenannt</Tab>
              <Tab type="button" $active>EnergieDiagrammSample</Tab>
              <CloseTab type="button" aria-label="Tab schließen">
                <CrossIcon />
              </CloseTab>
            </TabStrip>
            <CanvasFrame>
              <Diagram />
            </CanvasFrame>
            <Entries />
          </Main>
        </Body>
      </Window>
      <ExportDialog />
    </>
  );
}

export default App;
